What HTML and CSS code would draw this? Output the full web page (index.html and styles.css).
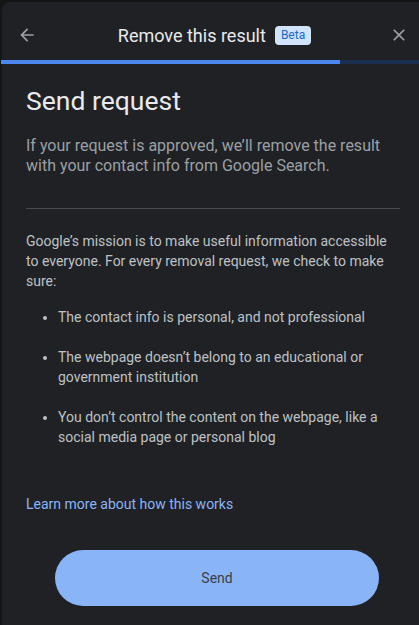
FILE: index.html
```html
<!DOCTYPE html>
<html lang="en">

<head>
    <meta charset="UTF-8">
    <meta name="viewport" content="width=device-width, initial-scale=1.0">
    <title>Remove this result</title>
    <link rel="stylesheet" href="styles.css">
</head>

<body>
    <div class="panel">
        <div class="header">
            <button class="icon-btn back" aria-label="Back">
                <svg width="20" height="20" viewBox="0 0 24 24"><path d="M20 11H7.83l5.59-5.59L12 4l-8 8 8 8 1.41-1.41L7.83 13H20v-2z"/></svg>
            </button>
            <div class="title">
                <span>Remove this result</span>
                <span class="badge">Beta</span>
            </div>
            <button class="icon-btn close" aria-label="Close">
                <svg width="20" height="20" viewBox="0 0 24 24"><path d="M19 6.41L17.59 5 12 10.590 6.41 5 5 6.41 10.59 12 5 17.59 6.41 19 12 13.41 17.59 19 19 17.59 13.41 12z"/></svg>
            </button>
        </div>
        <div class="progress">
            <div class="progress-fill"></div>
        </div>
        <div class="content">
            <h1>Send request</h1>
            <p class="lead">If your request is approved, we’ll remove the result with your contact info from Google Search.</p>
            <hr class="divider">
            <p class="info">Google’s mission is to make useful information accessible to everyone. For every removal request, we check to make sure:</p>
            <ul class="checks">
                <li>The contact info is personal, and not professional</li>
                <li>The webpage doesn’t belong to an educational or government institution</li>
                <li>You don’t control the content on the webpage, like a social media page or personal blog</li>
            </ul>
            <a class="learn" href="#">Learn more about how this works</a>
            <button class="send">Send</button>
        </div>
    </div>
</body>

</html>
```

FILE: styles.css
```css
body {
    margin: 0;
    background-color: #151515;
    font-family: Roboto, "Liberation Sans", sans-serif;
    overflow: hidden;
}

.panel {
    margin: 2px 0 0 2px;
    min-height: 623px;
    background-color: #202124;
    border-top-left-radius: 8px;
}

.header {
    display: flex;
    align-items: center;
    height: 58px;
    padding-top: 8px;
    box-sizing: border-box;
}

.icon-btn {
    width: 20px;
    height: 20px;
    padding: 0;
    border: none;
    background: none;
    fill: #9aa0a6;
}

.icon-btn.back {
    margin-left: 15px;
}

.icon-btn.close {
    margin-right: 10px;
}

.title {
    flex: 1;
    display: flex;
    justify-content: center;
    align-items: center;
    padding-left: 3px;
    color: #e8eaed;
    font-size: 18px;
}

.badge {
    margin-left: 9px;
    padding: 0 6px;
    height: 19px;
    line-height: 19px;
    border-radius: 4px;
    background-color: #d2e3fc;
    color: #1967d2;
    font-size: 12px;
}

.progress {
    height: 4px;
    margin-left: -1px;
    background-color: #1c2f50;
}

.progress-fill {
    width: 81%;
    height: 100%;
    background-color: #4a88f0;
}

.content {
    padding: 21px 19px 0 24px;
}

h1 {
    margin: 0;
    font-size: 26.5px;
    font-weight: 400;
    line-height: 32px;
    color: #e8eaed;
}

.lead {
    margin: 19px 0 0;
    font-size: 16px;
    line-height: 20px;
    color: #9aa0a6;
}

.divider {
    margin: 32px 0 0;
    border: none;
    border-top: 1px solid #494c50;
}

.info {
    margin: 22px 0 0;
    font-size: 14px;
    line-height: 20px;
    color: #bdc1c6;
}

.checks {
    margin: 16px 0 0;
    padding-left: 32px;
    font-size: 14px;
    line-height: 20px;
    color: #bdc1c6;
}

.checks li {
    margin-bottom: 20px;
}

.checks li:last-child {
    margin-bottom: 0;
}

.learn {
    display: block;
    margin-top: 47px;
    font-size: 14px;
    line-height: 20px;
    color: #8ab4f8;
    text-decoration: none;
}

.send {
    display: block;
    margin: 36px 0 0 29px;
    width: 324px;
    height: 56px;
    border: none;
    border-radius: 28px;
    background-color: #8ab4f8;
    color: #3c4043;
    font-family: inherit;
    font-size: 14px;
}
```
